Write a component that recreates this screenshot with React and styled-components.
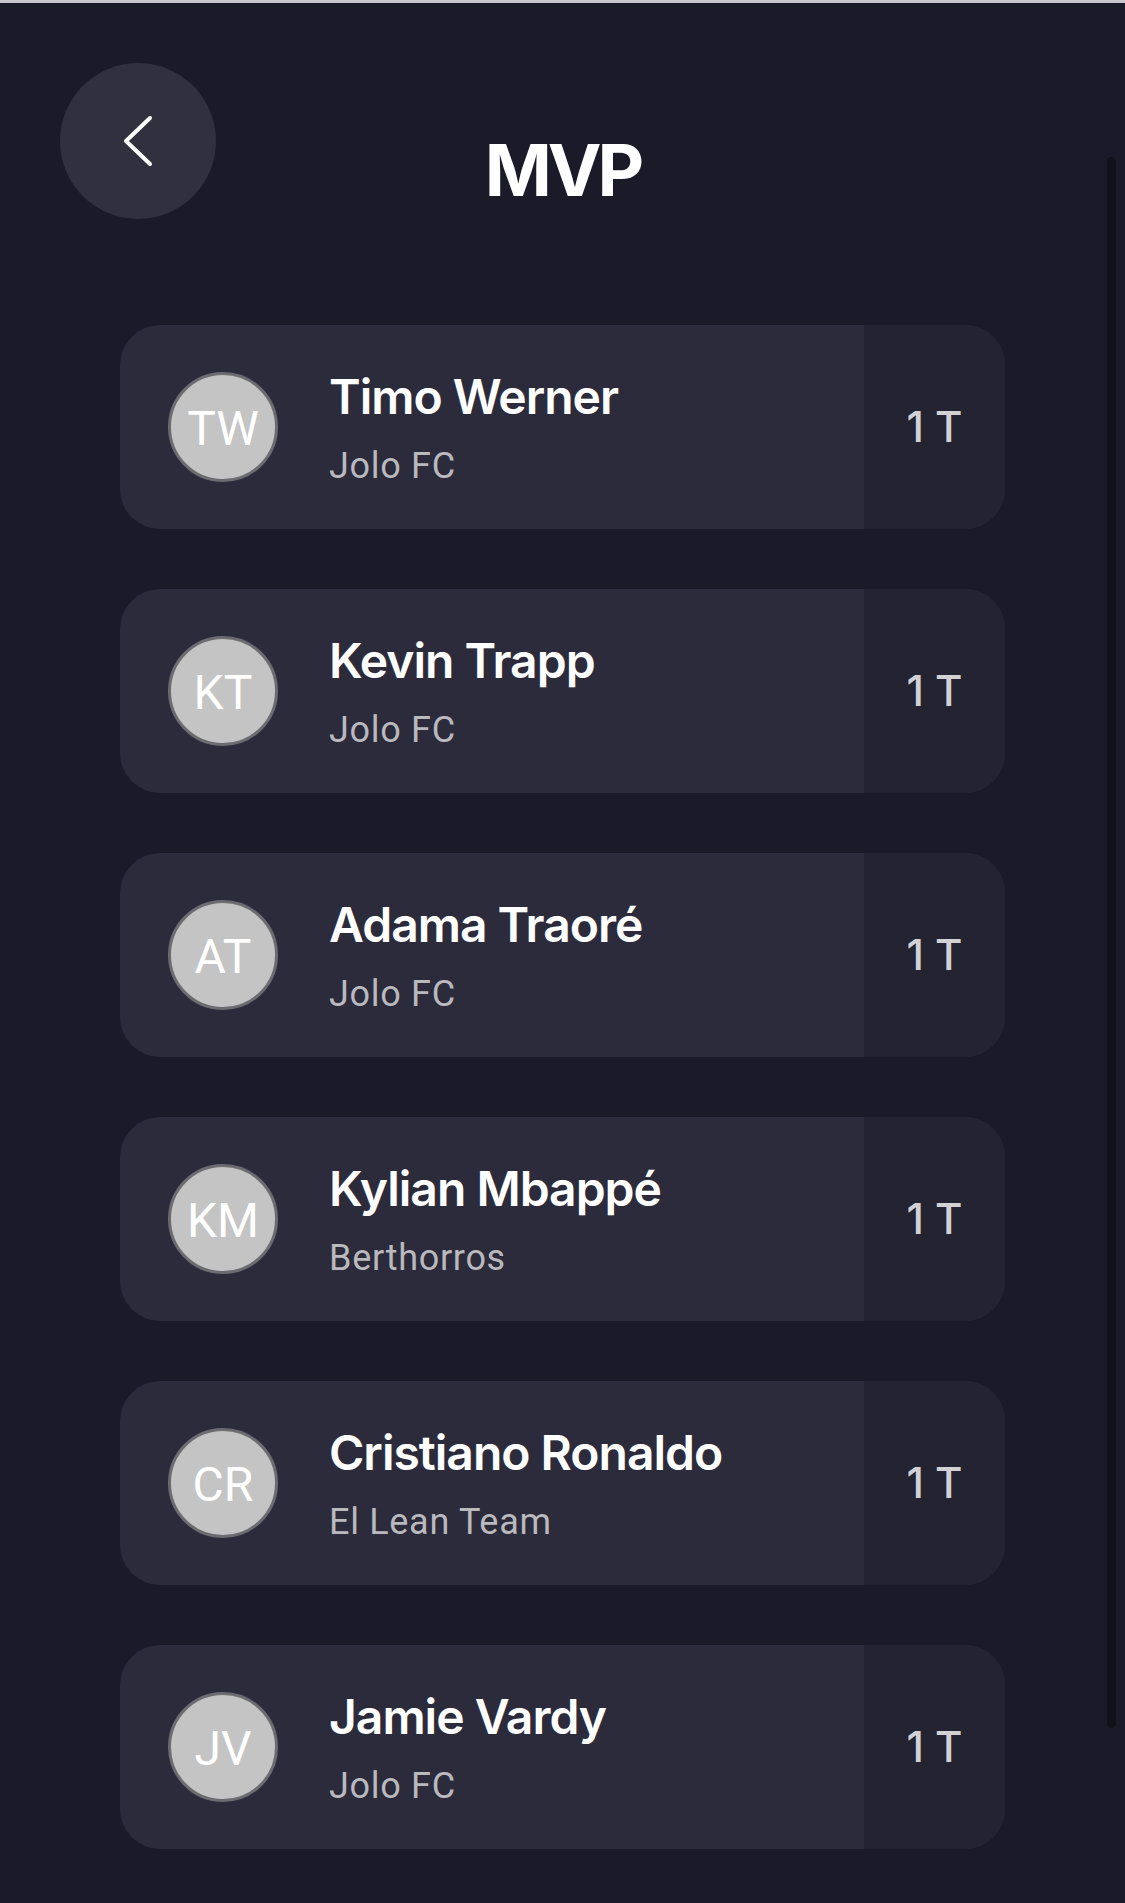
import React from 'react';
import styled, { createGlobalStyle } from 'styled-components';

const GlobalStyle = createGlobalStyle`
  html, body {
    margin: 0;
    padding: 0;
    background: #1a1a29;
  }
  * { box-sizing: border-box; }
`

const Page = styled.div`
  position: relative;
  min-height: 100vh;
  background: #1a1a29;
  padding-bottom: 54px;
  font-family: Inter, "Noto Sans", sans-serif;
`

const TopStrip = styled.div`
  height: 3px;
  background: #c6c6ca;
`

const Header = styled.div`
  display: grid;
  grid-template-columns: 1fr auto 1fr;
  padding: 60px 60px 0;
`

const BackButton = styled.button`
  width: 156px;
  height: 156px;
  border-radius: 50%;
  border: none;
  background: #30303e;
  display: flex;
  align-items: center;
  justify-content: center;
  padding: 0;
  justify-self: start;
  cursor: pointer;
`

const Title = styled.h1`
  margin: 71px 0 0;
  font-size: 72px;
  line-height: 1;
  font-weight: 700;
  letter-spacing: -4px;
  color: #ffffff;
  align-self: start;
`

const List = styled.div`
  display: flex;
  flex-direction: column;
  gap: 60px;
  padding: 0 120px;
  margin-top: 106px;
`

const Card = styled.div`
  display: flex;
  height: 204px;
  border-radius: 40px;
  overflow: hidden;
  background: #2c2b3b;
`

const Main = styled.div`
  flex: 1;
  display: flex;
  align-items: center;
  padding-left: 48px;
  gap: 51px;
`

const Avatar = styled.div`
  width: 110px;
  height: 110px;
  border-radius: 50%;
  background: #c4c4c4;
  border: 3px solid #6b6b70;
  display: flex;
  align-items: center;
  justify-content: center;
  color: #ffffff;
  font-family: Roboto, "Liberation Sans", sans-serif;
  font-size: 48px;
  line-height: 1;
  padding-top: 3px;
  flex-shrink: 0;
`

const Info = styled.div`
  display: flex;
  flex-direction: column;
  justify-content: center;
  gap: 20px;
  padding-top: 2px;
`

const Name = styled.div`
  font-size: 48px;
  line-height: 1.2;
  font-weight: 600;
  letter-spacing: -1px;
  color: #ffffff;
`

const Team = styled.div`
  font-family: Roboto, "Liberation Sans", sans-serif;
  font-size: 36px;
  line-height: 1.2;
  letter-spacing: 0.7px;
  color: #b9b9be;
`

const Score = styled.div`
  width: 141px;
  display: flex;
  align-items: center;
  justify-content: center;
  background: #242331;
  color: #d2d2d6;
  font-size: 42px;
  font-weight: 500;
  line-height: 1;
`

const Scrollbar = styled.div`
  position: absolute;
  top: 157px;
  right: 9px;
  width: 9px;
  height: 1571px;
  border-radius: 5px;
  background: #11111a;
`

const players = [
  { initials: 'TW', name: 'Timo Werner', team: 'Jolo FC', score: '1 T' },
  { initials: 'KT', name: 'Kevin Trapp', team: 'Jolo FC', score: '1 T' },
  { initials: 'AT', name: 'Adama Traoré', team: 'Jolo FC', score: '1 T' },
  { initials: 'KM', name: 'Kylian Mbappé', team: 'Berthorros', score: '1 T' },
  { initials: 'CR', name: 'Cristiano Ronaldo', team: 'El Lean Team', score: '1 T' },
  { initials: 'JV', name: 'Jamie Vardy', team: 'Jolo FC', score: '1 T' },
]

const ChevronLeft = () => (
  <svg width="32" height="52" viewBox="0 0 32 52" fill="none">
    <polyline points="28,3 4,26 28,49" stroke="#ffffff" strokeWidth="4" strokeLinecap="round" strokeLinejoin="round" />
  </svg>
)

const App = () => {
  return (
    <Page>
      <GlobalStyle />
      <TopStrip />
      <Header>
        <BackButton aria-label="back">
          <ChevronLeft />
        </BackButton>
        <Title>MVP</Title>
        <div />
      </Header>
      <List>
        {players.map((p) => (
          <Card key={p.name}>
            <Main>
              <Avatar>{p.initials}</Avatar>
              <Info>
                <Name>{p.name}</Name>
                <Team>{p.team}</Team>
              </Info>
            </Main>
            <Score>{p.score}</Score>
          </Card>
        ))}
      </List>
      <Scrollbar />
    </Page>
  )
}

export default App
